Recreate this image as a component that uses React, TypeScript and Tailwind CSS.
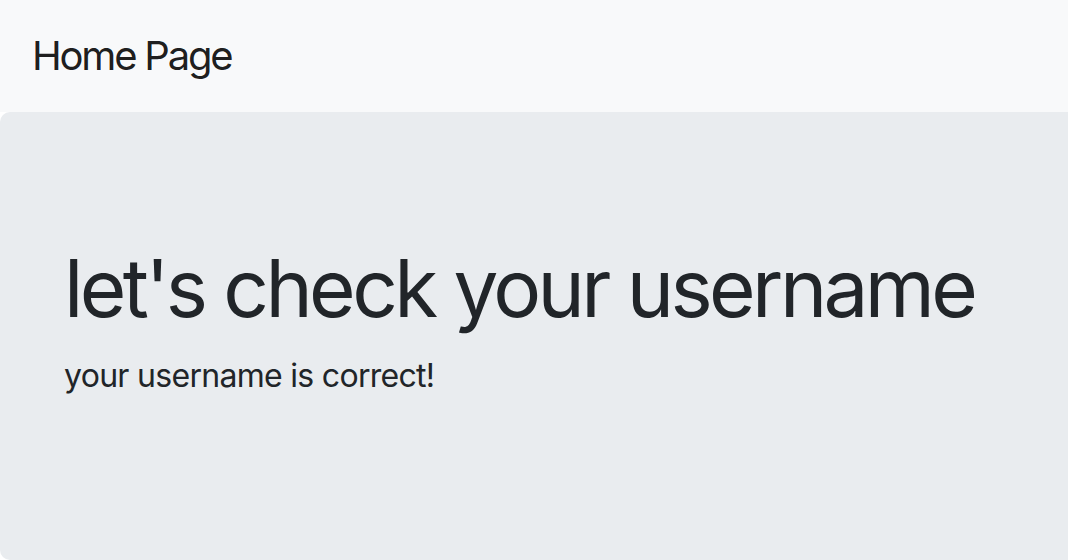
const App = () => {
  return (
    <div className="min-h-[560px] bg-white font-['Inter',sans-serif] text-[#212529]">
      <nav className="flex items-center bg-[#f8f9fa] px-8 py-4">
        <span className="py-[10px] text-[40px] leading-[60px] tracking-[-2.2px] text-black/90">
          Home Page
        </span>
      </nav>
      <div className="rounded-l-[10px] bg-[#e9ecef] px-16 py-32">
        <h1 className="mb-4 whitespace-nowrap text-[80px] leading-[96px] font-normal tracking-[-3.6px]">
          let's check your username
        </h1>
        <p className="mb-8 text-[32px] leading-[48px] tracking-[-0.7px]">
          your username is correct!
        </p>
      </div>
    </div>
  );
};

export default App;
